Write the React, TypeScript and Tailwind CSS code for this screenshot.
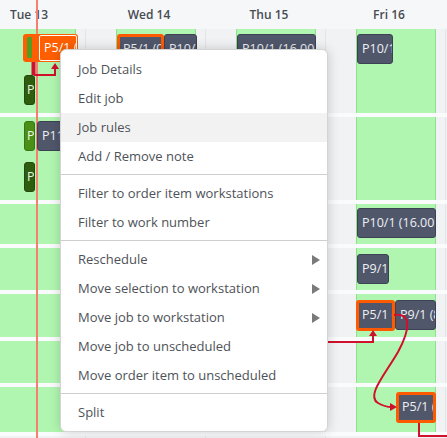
import React from "react";

const days = ["Tue 13", "Wed 14", "Thu 15", "Fri 16"];

// row heights of the schedule, top to bottom
const rows = [84, 83, 40, 42, 43, 42, 45];

type Block = {
  label: string;
  className: string;
  tone?: "slate" | "selected" | "dark" | "light";
};

const blocks: Block[] = [
  { label: "P5", tone: "dark", className: "left-[24px] top-[75px] w-[11px]" },
  { label: "P4", tone: "light", className: "left-[24px] top-[121px] w-[11px]" },
  { label: "P11/1 (4.00h)", className: "left-[37px] top-[121px] w-[40px]" },
  { label: "P6", tone: "dark", className: "left-[24px] top-[162px] w-[11px]" },
  { label: "P5/1 (0.50h)", tone: "selected", className: "left-[117px] top-[34px] w-[47px]" },
  { label: "P10/1 (16.00h)", className: "left-[164px] top-[34px] w-[33px]" },
  { label: "P10/1 (16.00h)", className: "left-[237px] top-[34px] w-[79px]" },
  { label: "P10/1", className: "left-[357px] top-[34px] w-[36px]" },
  { label: "P10/1 (16.00h)", className: "left-[357px] top-[208px] w-[79px]" },
  { label: "P9/1", className: "left-[357px] top-[254px] w-[32px]" },
  { label: "P5/1 (0.50h)", tone: "selected", className: "left-[356px] top-[300px] w-[39px] h-[31px]" },
  { label: "P9/1 (8.00h)", className: "left-[395px] top-[300px] w-[41px]" },
  { label: "P5/1 (0.50h)", tone: "selected", className: "left-[396px] top-[392px] w-[40px] h-[31px]" },
];

const toneClass = {
  slate: "bg-[#50576b] border border-[#3c4253] pl-[4px] text-[#eef0f4]",
  selected: "bg-[#50576b] border-[3px] border-[#ff5a00] pl-[3px] text-[#eef0f4]",
  dark: "bg-[#2e5d10] border border-[#234a0a] pl-[2px] text-[#e8f3e0]",
  light: "bg-[#4b8f19] border border-[#3b7412] pl-[2px] text-[#eef7e6]",
};

type MenuEntry = { label: string; sub?: boolean; active?: boolean } | "sep";

const menu: MenuEntry[] = [
  { label: "Job Details" },
  { label: "Edit job" },
  { label: "Job rules", active: true },
  { label: "Add / Remove note" },
  "sep",
  { label: "Filter to order item workstations" },
  { label: "Filter to work number" },
  "sep",
  { label: "Reschedule", sub: true },
  { label: "Move selection to workstation", sub: true },
  { label: "Move job to workstation", sub: true },
  { label: "Move job to unscheduled" },
  { label: "Move order item to unscheduled" },
  "sep",
  { label: "Split" },
];

function DayCell({ filler = false }: { filler?: boolean }) {
  return (
    <div className="flex w-[120px] shrink-0 border-l border-[#e2e4e7]">
      <div className="w-[30px] bg-[#f1f2f4]" />
      <div
        className={
          filler
            ? "w-[80px] bg-[#f1f2f4]"
            : "w-[80px] bg-[#b1f6b0] border-x border-[#8fdf8c]"
        }
      />
      <div className="w-[9px] bg-[#f1f2f4]" />
    </div>
  );
}

function ScheduleRow({ height, filler }: { height: number; filler?: boolean }) {
  return (
    <div className="flex ml-[-35px]" style={{ height }}>
      {[0, 1, 2, 3, 4].map((i) => (
        <DayCell key={i} filler={filler} />
      ))}
    </div>
  );
}

function Arrows() {
  return (
    <svg
      className="absolute inset-0 pointer-events-none"
      width={447}
      height={438}
      viewBox="0 0 447 438"
      fill="none"
    >
      <g stroke="#d0102c" strokeWidth={2}>
        <path d="M33.5 62 V75" strokeWidth={4} />
        <path d="M34 75 H55 V68" />
        <path d="M300 342 H373 V335" />
        <path d="M394 315 C 412 312, 410 330, 398 352 C 384 376, 366 396, 378 403 C 383 406, 388 407, 392 407" />
        <path d="M419 423 V436 H447" />
      </g>
      <g fill="#d0102c">
        <path d="M51 69 L55 63 L59 69 Z" />
        <path d="M369 336 L373 330 L377 336 Z" />
        <path d="M390 403 L397 407 L390 411 Z" />
      </g>
    </svg>
  );
}

function ContextMenu() {
  return (
    <div className="absolute left-[60px] top-[49px] w-[268px] bg-white rounded-[6px] border border-[#d4d4d4] shadow-[0_0_12px_rgba(0,0,0,0.18)] pt-[5px] pb-[4px] z-20">
      {menu.map((entry, i) =>
        entry === "sep" ? (
          <div key={i} className="mt-[3px] mb-[4px] h-px bg-[#cfcfcf]" />
        ) : (
          <div
            key={i}
            className={
              "flex h-[29px] items-center justify-between pl-[17px] pr-[7px] text-[13px] text-[#4e5258] " +
              (entry.active ? "bg-[#f2f2f2]" : "")
            }
          >
            <span>{entry.label}</span>
            {entry.sub && (
              <svg width={8} height={10} viewBox="0 0 8 10">
                <path d="M0 0 L8 5 L0 10 Z" fill="#7a7a7a" />
              </svg>
            )}
          </div>
        ),
      )}
    </div>
  );
}

export default function App() {
  return (
    <div
      className="relative w-[447px] h-[438px] overflow-hidden bg-[#f5f6f8]"
      style={{ fontFamily: '"Open Sans", "Liberation Sans", sans-serif' }}
    >
      {/* day header */}
      <div className="flex h-[29px] ml-[-31px] bg-[#f6f7f9]">
        {days.map((d) => (
          <div
            key={d}
            className="w-[120px] shrink-0 flex items-center justify-center text-[12px] font-semibold text-[#474b52]"
          >
            {d}
          </div>
        ))}
      </div>

      {/* schedule rows */}
      <div className="flex flex-col gap-[4px] bg-[#fafbfc]">
        {rows.map((h, i) => (
          <ScheduleRow key={i} height={h} />
        ))}
        <ScheduleRow height={20} filler />
      </div>

      {/* current time */}
      <div className="absolute left-[36px] top-0 w-[2px] h-full bg-[#f5806f]" />

      {/* selected group on Tue */}
      <div className="absolute left-[23px] top-[34px] w-[55px] h-[28px] rounded-[3px] bg-[#ff5f00]">
        <div className="absolute left-[4px] top-[3px] w-[5px] h-[21px] bg-[#549d22] rounded-[1px]" />
        <div className="absolute left-[16px] top-[1px] w-[38px] h-[26px] border border-white rounded-[2px] pl-[4px] text-[12.5px] leading-[24px] text-white whitespace-nowrap overflow-hidden">
          P5/1 (0.50h)
        </div>
      </div>

      {blocks.map((b, i) => (
        <div
          key={i}
          className={
            "absolute h-[30px] rounded-[3px] overflow-hidden whitespace-nowrap text-[12.5px] flex items-center " +
            toneClass[b.tone ?? "slate"] +
            " " +
            b.className
          }
        >
          {b.label}
        </div>
      ))}

      <Arrows />
      <ContextMenu />
    </div>
  );
}
